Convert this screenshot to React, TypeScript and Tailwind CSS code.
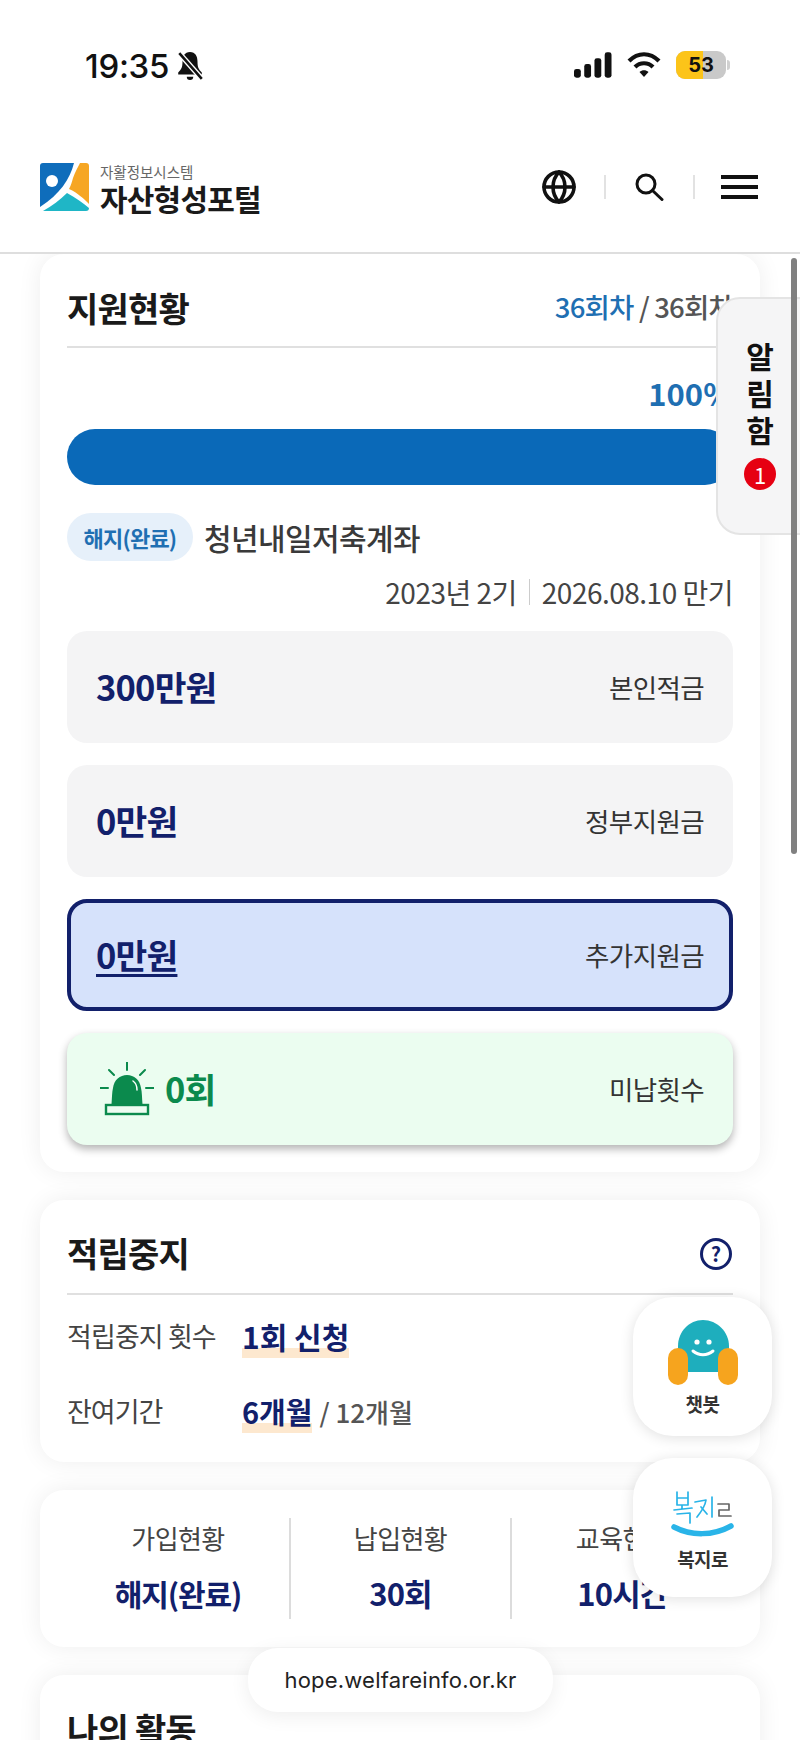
import { Globe } from 'lucide-react';

const KR = "font-['Noto_Sans_CJK_KR','Noto_Sans',sans-serif]";

const amounts = [
  { value: '300만원', label: '본인적금' },
  { value: '0만원', label: '정부지원금' },
];

function Logo() {
  return (
    <svg width="50" height="48" viewBox="0 0 50 48">
      <path d="M3 0H34C30 16 20 31 0 44V3C0 1 1 0 3 0Z" fill="#0F6DBB" />
      <circle cx="12" cy="18" r="6" fill="#fff" />
      <path d="M33 15C35 9 38 4 40 0H46C48 0 49 1 49 3V41C44 36 38 30 29 26C31 22 32 19 33 15Z" fill="#F6A623" />
      <path d="M27 30C36 35 43 40 49 45C49 47 48 48 46 48H3C12 43 20 37 27 30Z" fill="#1FB6C6" />
    </svg>
  );
}

function Siren() {
  return (
    <svg width="54" height="54" viewBox="0 0 54 54" fill="none" stroke="#0B8A4D" strokeWidth="2" strokeLinecap="round">
      <path d="M27 0V8M9 8L14 13M45 8L40 13M0 26H8M46 26H54" />
      <path d="M11.5 42.5C12 36 12 30 13 26C14 18 20 13 27 13C34 13 40 18 41 26C42 30 42 36 42.5 42.5Z" fill="#0B8A4D" stroke="none" />
      <path d="M33 19C36 21 37 24 37 28" stroke="#fff" strokeWidth="1.5" />
      <rect x="6" y="43" width="42" height="9" fill="#EDFCF1" strokeWidth="2.4" strokeLinecap="butt" />
    </svg>
  );
}

function Chatbot() {
  return (
    <svg width="70" height="66" viewBox="0 0 70 66">
      <path d="M10 52V26C10 12 21 0 35 0C49 0 61 12 61 26V52Z" fill="#1EAEBD" />
      <rect x="0" y="28" width="20" height="37" rx="10" fill="#F6A41E" />
      <rect x="50" y="28" width="20" height="37" rx="10" fill="#F6A41E" />
      <circle cx="29" cy="22" r="2.6" fill="#fff" />
      <circle cx="41" cy="22" r="2.6" fill="#fff" />
      <path d="M25 31C31 36 39 36 45 31" stroke="#fff" strokeWidth="3" strokeLinecap="round" fill="none" />
    </svg>
  );
}

function Bokjiro() {
  return (
    <svg width="64" height="50" viewBox="0 0 64 50" fill="none" strokeLinecap="round" strokeLinejoin="round">
      <path d="M6 2V15H17V2M6 8H17M3 20L21 18M11 15V19M6 24L19 23V33" stroke="#29B4E8" strokeWidth="1.7" />
      <path d="M24 12L35 10C34 17 30 22 26 27M30 17L36 24M41 7V27" stroke="#29B4E8" strokeWidth="1.7" />
      <path d="M47 14H58V20H48V26H60" stroke="#666" strokeWidth="1.7" />
      <path d="M3 37C20 46 42 46 60 36" stroke="#29B4E8" strokeWidth="5.5" />
    </svg>
  );
}

export default function App() {
  return (
    <div className={`relative h-[1740px] w-[800px] overflow-hidden bg-white ${KR}`}>
      <header className="relative z-10 h-[254px] border-b-2 border-[#dedede] bg-white">
        <div className="flex h-[130px] items-start justify-between pt-[46px] pl-[85px] pr-[70px]">
          <div className="flex items-center gap-[7px]">
            <span className="font-['Inter'] text-[33px] leading-[40px] font-medium tracking-[-0.3px] text-[#111]">19:35</span>
            <svg width="28" height="30" viewBox="0 0 26 28" fill="#111">
              <path d="M13 1C8 1 6 5 6 10C6 15 5 17 2 20V22H24V20C21 17 20 15 20 10C20 5 18 1 13 1Z" />
              <path d="M10 24H16C16 26 15 27 13 27C11 27 10 26 10 24Z" />
              <path d="M3 2L24 26" stroke="#fff" strokeWidth="5" />
              <path d="M3 2L24 26" stroke="#111" strokeWidth="2.4" />
            </svg>
          </div>
          <div className="flex items-center gap-[14px] pt-[5px]">
            <svg width="38" height="26" viewBox="0 0 39 26" fill="#111">
              <rect x="0" y="17" width="7" height="9" rx="2.5" />
              <rect x="10.5" y="12" width="7" height="14" rx="2.5" />
              <rect x="21" y="6" width="7" height="20" rx="2.5" />
              <rect x="31.5" y="0" width="7" height="26" rx="2.5" />
            </svg>
            <svg width="36" height="26" viewBox="0 0 34 26" fill="none" stroke="#111" strokeWidth="4.2">
              <path d="M2 9C11 0 23 0 32 9" />
              <path d="M8 15C13 10 21 10 26 15" />
              <path d="M17 25L12.5 20C15 17.5 19 17.5 21.5 20Z" fill="#111" stroke="none" />
            </svg>
            <div className="relative flex h-[28px] w-[50px] items-center justify-center overflow-hidden rounded-[9px] bg-[#c9c9c9]">
              <div className="absolute inset-y-0 left-0 w-[27px] bg-[#fcc419]" />
              <span className="relative font-['Inter'] text-[20px] leading-none font-bold text-[#111]">53</span>
            </div>
            <div className="-ml-[13px] h-[10px] w-[3px] rounded-r bg-[#d0d0d0]" />
          </div>
        </div>
        <div className="flex h-[122px] items-start justify-between pl-[40px] pr-[42px]">
          <div className="flex items-start gap-[10px] pt-[33px]">
            <Logo />
            <div>
              <div className="text-[14.5px] leading-[18px] text-[#666]">자활정보시스템</div>
              <div className="text-[30px] leading-[35px] font-bold tracking-[-0.8px] text-[#1a1a1a]">자산형성포털</div>
            </div>
          </div>
          <div className="flex items-center pt-[39px]">
            <Globe size={36} strokeWidth={2.4} className="text-[#111]" />
            <div className="mr-[29px] ml-[27px] h-[24px] w-[2px] bg-[#e2e2e2]" />
            <svg width="29" height="28" viewBox="0 0 29 28" fill="none" stroke="#111" strokeWidth="3" strokeLinecap="round">
              <circle cx="11" cy="11" r="9" />
              <path d="M17.5 17.5L27 26.5" />
            </svg>
            <div className="mr-[26px] ml-[29px] h-[24px] w-[2px] bg-[#e2e2e2]" />
            <div className="flex w-[37px] flex-col gap-[6px]">
              <div className="h-[4px] bg-[#111]" />
              <div className="h-[4px] bg-[#111]" />
              <div className="h-[4px] bg-[#111]" />
            </div>
          </div>
        </div>
      </header>

      <main className="flex flex-col gap-[28px] px-[40px]">
        <section className="h-[918px] rounded-[24px] bg-white px-[27px] shadow-[0_0_24px_rgba(0,0,0,0.07)]">
          <div className="flex h-[94px] items-center justify-between border-b-2 border-[#e0e0e0] pt-[14px]">
            <h2 className="text-[34px] font-bold tracking-[-0.8px] text-[#1a1a1a]">지원현황</h2>
            <div className="text-[27.5px] font-medium tracking-[-0.8px] text-[#555]">
              <span className="text-[#1f6fb2]">36회차</span> / 36회차
            </div>
          </div>
          <div className="pt-[25px] text-right text-[31px] leading-[40px] font-bold text-[#1f6fb2]">100%</div>
          <div className="mt-[16px] h-[56px] rounded-full bg-[#0a69b8]" />
          <div className="mt-[28px] flex items-center gap-[11px]">
            <span className="flex h-[48px] w-[126px] items-center justify-center rounded-full bg-[#e6f0fa] text-[22px] font-bold tracking-[-0.8px] text-[#1f6fb2]">
              해지(완료)
            </span>
            <span className="text-[30px] font-medium tracking-[-0.6px] text-[#3a3a3a]">청년내일저축계좌</span>
          </div>
          <div className="mt-[11px] flex h-[40px] items-center justify-end text-[28px] tracking-[-0.5px] text-[#444]">
            <span>2023년 2기</span>
            <span className="mx-[12px] h-[26px] w-[1px] bg-[#ccc]" />
            <span>2026.08.10 만기</span>
          </div>
          <div className="mt-[19px] flex flex-col gap-[22px]">
            {amounts.map((a) => (
              <div key={a.label} className="flex h-[112px] items-center justify-between rounded-[20px] bg-[#f4f4f5] px-[29px]">
                <span className="text-[34.5px] font-bold tracking-[-0.8px] text-[#12206b]">{a.value}</span>
                <span className="text-[26.5px] tracking-[-0.6px] text-[#333]">{a.label}</span>
              </div>
            ))}
            <div className="flex h-[112px] items-center justify-between rounded-[20px] border-4 border-[#12206b] bg-[#d6e2fb] px-[25px]">
              <span className="text-[34.5px] font-bold tracking-[-0.8px] text-[#12206b] underline underline-offset-[5px]">0만원</span>
              <span className="text-[26.5px] tracking-[-0.6px] text-[#333]">추가지원금</span>
            </div>
            <div className="flex h-[112px] items-center justify-between rounded-[20px] bg-[#ebfdf0] pr-[29px] pl-[33px] shadow-[0_4px_8px_rgba(0,0,0,0.3)]">
              <div className="flex items-center gap-[11px]">
                <Siren />
                <span className="text-[34.5px] font-bold tracking-[-0.8px] text-[#0b8a4d]">0회</span>
              </div>
              <span className="text-[26.5px] tracking-[-0.6px] text-[#333]">미납횟수</span>
            </div>
          </div>
        </section>

        <section className="h-[262px] rounded-[24px] bg-white px-[27px] shadow-[0_0_24px_rgba(0,0,0,0.07)]">
          <div className="flex h-[95px] items-center justify-between border-b-2 border-[#e0e0e0] pt-[12px]">
            <h2 className="text-[34px] font-bold tracking-[-0.8px] text-[#1a1a1a]">적립중지</h2>
            <div className="mt-[2px] -ml-[1px] mr-[1px] flex h-[32px] w-[32px] items-center justify-center rounded-full border-[3px] border-[#12206b] text-[20px] font-bold text-[#12206b]">?</div>
          </div>
          <div className="mt-[17px] flex h-[48px] items-center">
            <span className="w-[175px] text-[27px] tracking-[-0.9px] text-[#444]">적립중지 횟수</span>
            <span className="bg-[linear-gradient(transparent_78%,#fde8cf_78%)] text-[30px] leading-[44px] font-bold text-[#12206b]">1회 신청</span>
          </div>
          <div className="mt-[27px] flex h-[48px] items-center">
            <span className="w-[175px] text-[27px] tracking-[-1px] text-[#444]">잔여기간</span>
            <span className="bg-[linear-gradient(transparent_78%,#fde8cf_78%)] text-[29px] leading-[44px] font-bold text-[#12206b]">6개월</span>
            <span className="ml-[7px] text-[26px] font-medium text-[#555]">/ 12개월</span>
          </div>
        </section>

        <section className="grid h-[157px] grid-cols-[224px_221px_1fr] items-center rounded-[24px] bg-white px-[27px] shadow-[0_0_24px_rgba(0,0,0,0.07)]">
          <div className="flex h-[101px] flex-col items-center justify-between border-r-2 border-[#dcdcdc] pb-[3px]">
            <span className="text-[26px] tracking-[-0.6px] text-[#444]">가입현황</span>
            <span className="text-[30px] font-bold tracking-[-1.1px] text-[#12206b]">해지(완료)</span>
          </div>
          <div className="flex h-[101px] flex-col items-center justify-between border-r-2 border-[#dcdcdc] pb-[3px]">
            <span className="text-[26px] tracking-[-0.6px] text-[#444]">납입현황</span>
            <span className="text-[31px] font-bold tracking-[-0.8px] text-[#12206b]">30회</span>
          </div>
          <div className="flex h-[101px] flex-col items-center justify-between pb-[3px]">
            <span className="text-[26px] tracking-[-0.6px] text-[#444]">교육현황</span>
            <span className="text-[31px] font-bold tracking-[-0.8px] text-[#12206b]">10시간</span>
          </div>
        </section>

        <section className="h-[200px] rounded-[24px] bg-white px-[27px] pt-[28px] shadow-[0_0_24px_rgba(0,0,0,0.07)]">
          <h2 className="text-[34px] font-bold tracking-[-0.8px] text-[#1a1a1a]">나의 활동</h2>
        </section>
      </main>

      <div className="absolute top-[258px] right-[3px] z-20 h-[596px] w-[6px] rounded-full bg-[#808080]" />

      <div className="absolute top-[297px] left-[716px] z-10 flex h-[238px] w-[90px] flex-col items-center rounded-l-[24px] border-2 border-[#e4e4e4] bg-[#f5f5f6] pt-[38px] pr-[2px]">
        <span className="text-[30px] leading-[37px] font-bold text-[#111]">알</span>
        <span className="text-[30px] leading-[37px] font-bold text-[#111]">림</span>
        <span className="text-[30px] leading-[37px] font-bold text-[#111]">함</span>
        <span className="mt-[10px] flex h-[32px] w-[32px] items-center justify-center rounded-full bg-[#e60012] text-[22px] leading-none text-white">1</span>
      </div>

      <div className="absolute top-[1297px] left-[633px] flex h-[139px] w-[139px] flex-col items-center rounded-[40px] bg-white pt-[23px] shadow-[0_2px_14px_rgba(0,0,0,0.12)]">
        <Chatbot />
        <span className="mt-[5px] text-[19px] leading-[26px] font-bold tracking-[-0.6px] text-[#333]">챗봇</span>
      </div>

      <div className="absolute top-[1458px] left-[633px] flex h-[139px] w-[139px] flex-col items-center rounded-[40px] bg-white pt-[32px] shadow-[0_2px_14px_rgba(0,0,0,0.12)]">
        <Bokjiro />
        <span className="mt-[6px] text-[19px] leading-[26px] font-bold tracking-[-0.6px] text-[#333]">복지로</span>
      </div>

      <div className="absolute top-[1648px] left-[248px] flex h-[64px] w-[305px] items-center justify-center rounded-[30px] bg-white font-['Inter'] text-[22px] tracking-[0.2px] text-[#222] shadow-[0_4px_20px_rgba(0,0,0,0.07)]">
        hope.welfareinfo.or.kr
      </div>
    </div>
  );
}
